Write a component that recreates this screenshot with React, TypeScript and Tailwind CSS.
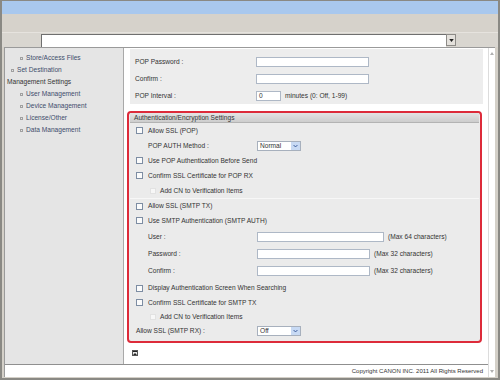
import React from 'react';

function Box({ off }: { off?: boolean }) {
  if (off) return <span className="w-[6px] h-[6px] shrink-0 bg-[#f7f7f7] border border-[#e2e2e2]" />;
  return <span className="w-[7px] h-[7px] shrink-0 bg-[#fbfbfb] border border-[#7d8da3]" />;
}

function Field({ w }: { w: string }) {
  return <div className={`${w} h-[10px] bg-white border border-[#aeb8c6]`} />;
}

function Select({ value }: { value: string }) {
  return (
    <div className="w-[44px] h-[10px] flex bg-white border border-[#a7b0bd]">
      <span className="flex-1 pl-[2px] leading-[8px]">{value}</span>
      <span className="w-[9px] bg-[#c8daf4] flex items-center justify-center">
        <svg viewBox="0 0 8 6" className="w-[5px] h-[4px]">
          <path d="M1 1.5 L4 4.5 L7 1.5" stroke="#3a5b9a" strokeWidth="1.6" fill="none" />
        </svg>
      </span>
    </div>
  );
}

function Check({ label, h = 'h-[15px]' }: { label: string; h?: string }) {
  return (
    <div className={`${h} flex items-center gap-[5px] pl-[6px]`}>
      <Box />
      <span>{label}</span>
    </div>
  );
}

function SubCheck({ label, h = 'h-[15px]' }: { label: string; h?: string }) {
  return (
    <div className={`${h} flex items-center gap-[4px] pl-[20px]`}>
      <Box off />
      <span>{label}</span>
    </div>
  );
}

function NavLink({ label, indent }: { label: string; indent?: boolean }) {
  return (
    <div className={`h-[12px] flex items-center gap-[3px] text-[#3e4d6c] ${indent ? 'pl-[15px]' : 'pl-[6px]'}`}>
      <span className="w-[3px] h-[3px] border border-[#a0a0a0]" />
      <span>{label}</span>
    </div>
  );
}

export default function App() {
  return (
    <div className="w-[500px] h-[380px] flex flex-col bg-[#d4d0c8] border-t border-x-2 border-b-2 border-[#8a8984] text-[6.6px] text-[#333] font-['Liberation_Sans',Arial,sans-serif] overflow-hidden">
      <div className="h-[13px] bg-[#a9c8ee]" />
      <div className="h-[18px] bg-[#d6d2cb]" />
      <div className="h-[15px] flex items-center pl-[39px] bg-[#d9d6d0] border-t border-[#e6e3de]">
        <div className="w-[405px] h-[13px] bg-white border-t border-l border-[#6f6f6f]" />
        <div className="w-[10px] h-[12px] flex items-center justify-center bg-[#e4e1dc] border border-[#8d8b87]">
          <svg viewBox="0 0 6 4" className="w-[5px] h-[3px]">
            <path d="M0 0 H6 L3 4 Z" fill="#222" />
          </svg>
        </div>
      </div>

      <div className="flex-1 flex ml-[2px] mr-[3px] mb-[1px] bg-white border-t border-l border-[#9a9a9a]">
        <div className="flex-1 flex flex-col">
          <div className="flex-1 flex border-b border-[#8f8f8f]">
            <div className="w-[119px] pt-[4px] bg-[#e5e5e5] border-r border-[#a9a9a9]">
              <NavLink label="Store/Access Files" indent />
              <NavLink label="Set Destination" />
              <div className="h-[12px] flex items-center pl-[2px] text-[#333]">Management Settings</div>
              <NavLink label="User Management" indent />
              <NavLink label="Device Management" indent />
              <NavLink label="License/Other" indent />
              <NavLink label="Data Management" indent />
            </div>

            <div className="flex-1 flex flex-col pl-[3px] pr-[5px]">
              <div className="ml-[3px] mt-[1px] h-[55px] pt-[4px] pl-[5px] bg-[#ededed]">
                <div className="h-[17px] flex items-center">
                  <span className="w-[121px]">POP Password :</span>
                  <Field w="w-[113px]" />
                </div>
                <div className="h-[17px] flex items-center">
                  <span className="w-[121px]">Confirm :</span>
                  <Field w="w-[113px]" />
                </div>
                <div className="h-[17px] flex items-center">
                  <span className="w-[121px]">POP Interval :</span>
                  <div className="w-[25px] h-[10px] pl-[2px] leading-[8px] bg-white border border-[#aeb8c6]">0</div>
                  <span className="ml-[4px]">minutes (0: Off, 1-99)</span>
                </div>
              </div>

              <div className="mt-[7px] mr-[1px] h-[232px] px-[1px] bg-[#ebebeb] border-2 border-[#dd2b3a] rounded-[4px]">
                <div className="h-[10px] flex items-center pl-[4px] bg-gradient-to-b from-[#e4e4e4] to-[#cdcdcd] border-b border-[#b3b3b3]">
                  Authentication/Encryption Settings
                </div>
                <Check label="Allow SSL (POP)" />
                <div className="h-[15px] flex items-center pl-[18px]">
                  <span className="w-[109px]">POP AUTH Method :</span>
                  <Select value="Normal" />
                </div>
                <Check label="Use POP Authentication Before Send" />
                <Check label="Confirm SSL Certificate for POP RX" />
                <SubCheck label="Add CN to Verification Items" />
                <div className="h-[1px] bg-[#f7f7f7]" />
                <Check label="Allow SSL (SMTP TX)" h="h-[14px]" />
                <Check label="Use SMTP Authentication (SMTP AUTH)" />
                <div className="h-[17px] flex items-center pl-[18px]">
                  <span className="w-[109px]">User :</span>
                  <Field w="w-[127px]" />
                  <span className="ml-[4px]">(Max 64 characters)</span>
                </div>
                <div className="h-[17px] flex items-center pl-[18px]">
                  <span className="w-[109px]">Password :</span>
                  <Field w="w-[113px]" />
                  <span className="ml-[4px]">(Max 32 characters)</span>
                </div>
                <div className="h-[17px] flex items-center pl-[18px]">
                  <span className="w-[109px]">Confirm :</span>
                  <Field w="w-[113px]" />
                  <span className="ml-[4px]">(Max 32 characters)</span>
                </div>
                <div className="h-[2px]" />
                <Check label="Display Authentication Screen When Searching" h="h-[14px]" />
                <Check label="Confirm SSL Certificate for SMTP TX" />
                <SubCheck label="Add CN to Verification Items" h="h-[14px]" />
                <div className="h-[14px] flex items-center pl-[6px]">
                  <span className="w-[121px]">Allow SSL (SMTP RX) :</span>
                  <Select value="Off" />
                </div>
              </div>

              <div className="mt-[7px] ml-[5px] w-[6px] h-[6px] flex flex-col items-center justify-center gap-[0.5px] bg-[#e8e8e8] border border-[#555]">
                <span className="w-[4px] h-[1px] bg-[#222]" />
                <svg viewBox="0 0 4 2" className="w-[4px] h-[2px]">
                  <path d="M0 2 L2 0 L4 2 Z" fill="#222" />
                </svg>
              </div>
            </div>
          </div>

          <div className="h-[12px] flex items-center justify-end pr-[5px] text-[6px] text-[#333]">
            Copyright CANON INC. 2011 All Rights Reserved
          </div>
        </div>

        <div className="w-[7px] flex flex-col justify-between items-center py-[4px] border-l border-[#dcdcdc]">
          <svg viewBox="0 0 4 3" className="w-[4px] h-[3px]">
            <path d="M0 3 L2 0 L4 3 Z" fill="#b0b0b0" />
          </svg>
          <svg viewBox="0 0 4 3" className="w-[4px] h-[3px]">
            <path d="M0 0 H4 L2 3 Z" fill="#b0b0b0" />
          </svg>
        </div>
      </div>
    </div>
  );
}
